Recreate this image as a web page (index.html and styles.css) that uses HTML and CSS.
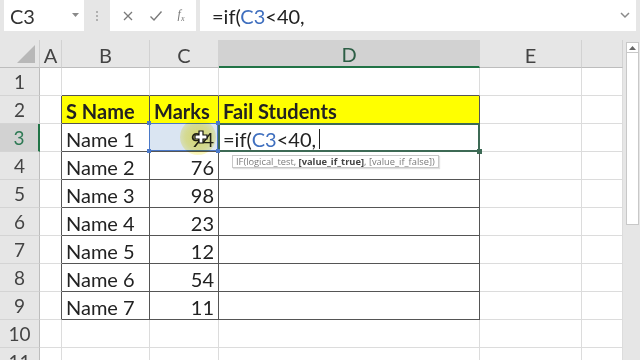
FILE: index.html
```html
<!DOCTYPE html>
<html>
<head>
<meta charset="utf-8">
<link rel="stylesheet" href="styles.css">
</head>
<body>
<div class="app">
  <div class="fbar">
    <div class="namebox"><span class="nb-text">C3</span>
      <svg class="nb-arrow" width="7" height="5" viewBox="0 0 7 5"><path d="M0 0h7L3.5 4z" fill="#8a8a8a"/></svg>
    </div>
    <div class="grip"><i></i><i></i><i></i></div>
    <div class="btns">
      <svg width="12" height="12" viewBox="0 0 12 12"><path d="M2 2l8 8M10 2l-8 8" stroke="#7a7a7a" stroke-width="1.3"/></svg>
      <svg width="14" height="12" viewBox="0 0 14 12"><path d="M1.5 6.5l3.5 3.5 7.5-8.5" stroke="#7a7a7a" stroke-width="1.4" fill="none"/></svg>
      <span class="fx">f<sub>x</sub></span>
    </div>
    <div class="formula"><span class="ftext">=if(<span class="ref">C3</span>&lt;40,</span>
      <svg class="f-arrow" width="10" height="7" viewBox="0 0 10 7"><path d="M1 1l4 4 4-4" stroke="#8a8a8a" stroke-width="1.5" fill="none"/></svg>
    </div>
  </div>
  <div class="sheet">
    <div class="grid">
      <div class="corner"><svg width="20" height="20" viewBox="0 0 20 20"><path d="M19 1V19H1z" fill="#b8b8b8"/></svg></div>
      <div class="ch">A</div><div class="ch">B</div><div class="ch">C</div><div class="ch sel">D</div><div class="ch">E</div><div class="ch"></div>

      <div class="rh">1</div><div class="c"></div><div class="c tp"></div><div class="c tp"></div><div class="c tp"></div><div class="c"></div><div class="c"></div>

      <div class="rh">2</div><div class="c lt"></div><div class="c tb hd">S Name</div><div class="c tb hd">Marks</div><div class="c tb hd">Fail Students</div><div class="c"></div><div class="c"></div>

      <div class="rh sel">3</div><div class="c lt"></div><div class="c tb">Name 1</div><div class="c tb num refcell">94<i class="h tl"></i><i class="h tr"></i><i class="h bl"></i><i class="h br"></i></div><div class="c tb active">=if(<span class="ref">C3</span>&lt;40,<span class="caret"></span></div><div class="c"></div><div class="c"></div>

      <div class="rh">4</div><div class="c lt"></div><div class="c tb">Name 2</div><div class="c tb num">76</div><div class="c tb"></div><div class="c"></div><div class="c"></div>

      <div class="rh">5</div><div class="c lt"></div><div class="c tb">Name 3</div><div class="c tb num">98</div><div class="c tb"></div><div class="c"></div><div class="c"></div>

      <div class="rh">6</div><div class="c lt"></div><div class="c tb">Name 4</div><div class="c tb num">23</div><div class="c tb"></div><div class="c"></div><div class="c"></div>

      <div class="rh">7</div><div class="c lt"></div><div class="c tb">Name 5</div><div class="c tb num">12</div><div class="c tb"></div><div class="c"></div><div class="c"></div>

      <div class="rh">8</div><div class="c lt"></div><div class="c tb">Name 6</div><div class="c tb num">54</div><div class="c tb"></div><div class="c"></div><div class="c"></div>

      <div class="rh">9</div><div class="c lt"></div><div class="c tb">Name 7</div><div class="c tb num">11</div><div class="c tb"></div><div class="c"></div><div class="c"></div>

      <div class="rh">10</div><div class="c"></div><div class="c"></div><div class="c"></div><div class="c"></div><div class="c"></div><div class="c"></div>

      <div class="rh">11</div><div class="c"></div><div class="c"></div><div class="c"></div><div class="c"></div><div class="c"></div><div class="c"></div>

      <div class="tip">IF(logical_test, <b>[value_if_true]</b>, [value_if_false])</div>
      <div class="glow"></div>
      <svg class="cursor" width="14" height="14" viewBox="0 0 14 14"><path d="M5 1h4v4h4v4H9v4H5V9H1V5h4z" fill="#fff" stroke="#111" stroke-width="1.2"/></svg>
    </div>
    <div class="vscroll">
      <div class="up"><svg width="7" height="4" viewBox="0 0 7 4"><path d="M0 4h7L3.5 0z" fill="#666"/></svg></div>
      <div class="thumb"></div>
    </div>
  </div>
</div>
</body>
</html>
```
FILE: styles.css
```css
html, body {
  margin: 0;
  padding: 0;
  width: 640px;
  height: 360px;
  overflow: hidden;
  background: #fff;
}
.app {
  width: 640px;
  height: 360px;
  display: flex;
  flex-direction: column;
  font-family: "Lato", "Open Sans", sans-serif;
  color: #222;
}
.fbar {
  height: 40px;
  flex: none;
  background: #e6e6e6;
  display: flex;
  align-items: flex-start;
  padding: 0 4px;
  box-sizing: border-box;
}
.namebox {
  width: 80px;
  height: 31px;
  background: #fff;
  display: flex;
  align-items: center;
  justify-content: space-between;
  padding: 0 5px 0 6px;
  box-sizing: border-box;
}
.nb-text {
  font-size: 20px;
  color: #333;
}
.grip {
  width: 26px;
  height: 31px;
  display: flex;
  flex-direction: column;
  align-items: center;
  justify-content: center;
  gap: 2px;
}
.grip i {
  width: 2px;
  height: 2px;
  background: #b0b0b0;
}
.btns {
  width: 86px;
  height: 31px;
  background: #fff;
  display: flex;
  align-items: center;
  justify-content: space-around;
  padding: 0 4px;
  box-sizing: border-box;
}
.fx {
  font-family: "Liberation Serif", serif;
  font-style: italic;
  font-size: 12px;
  color: #777;
}
.fx sub {
  font-size: 8px;
}
.formula {
  margin-left: 4px;
  flex: 1;
  height: 31px;
  background: #fff;
  display: flex;
  align-items: center;
  justify-content: space-between;
  padding: 0 6px 0 12px;
  box-sizing: border-box;
}
.ftext {
  font-size: 20px;
  color: #222;
}
.ref {
  color: #3f6fbf;
}
.sheet {
  flex: 1;
  display: flex;
  overflow: hidden;
}
.grid {
  position: relative;
  display: grid;
  grid-template-columns: 40px 22px 88px 69px 261px 102px 41px;
  grid-auto-rows: 28px;
  width: 623px;
  flex: none;
  font-size: 20px;
}
.grid > div {
  box-sizing: border-box;
}
.corner {
  background: #e6e6e6;
  border-right: 1px solid #cfcfcf;
  border-bottom: 1px solid #bdbdbd;
  display: flex;
  align-items: flex-end;
  justify-content: flex-end;
  padding: 0 3px 3px 0;
}
.ch {
  background: #e6e6e6;
  border-right: 1px solid #d2d2d2;
  border-bottom: 1px solid #bdbdbd;
  display: flex;
  align-items: center;
  justify-content: center;
  color: #444;
  padding-top: 2px;
}
.ch.sel {
  background: #d2d2d2;
  border-bottom: 2px solid #217346;
  color: #2d5e45;
}
.rh {
  background: #e6e6e6;
  border-right: 1px solid #bdbdbd;
  border-bottom: 1px solid #d4d4d4;
  display: flex;
  align-items: center;
  justify-content: center;
  color: #444;
  font-size: 19px;
}
.rh.sel {
  background: #d2d2d2;
  border-right: 2px solid #217346;
  color: #2f7a55;
}
.c {
  border-right: 1px solid #dcdcdc;
  border-bottom: 1px solid #dcdcdc;
  display: flex;
  align-items: center;
  padding: 2px 4px 0 4px;
  white-space: nowrap;
  color: #222;
}
.c.lt {
  border-right-color: #555;
}
.c.tp {
  border-bottom-color: #555;
}
.c.tb {
  border-right-color: #555;
  border-bottom-color: #555;
}
.c.hd {
  background: #ffff00;
  font-weight: bold;
}
.c.num {
  justify-content: flex-end;
}
.refcell {
  position: relative;
  background: #dae5f2;
}
.refcell::after {
  content: "";
  position: absolute;
  left: -1px;
  top: -1px;
  right: 0;
  bottom: 0;
  border: 1px solid #4a78c8;
}
.h {
  position: absolute;
  width: 4px;
  height: 4px;
  background: #4a78c8;
  z-index: 2;
}
.h.tl { left: -3px; top: -3px; }
.h.tr { right: -2px; top: -3px; }
.h.bl { left: -3px; bottom: -2px; }
.h.br { right: -2px; bottom: -2px; }
.active {
  position: relative;
  padding-left: 4px;
}
.active::after {
  content: "";
  position: absolute;
  left: -1px;
  top: -1px;
  right: -1px;
  bottom: -1px;
  border: 2px solid #3d6a55;
}
.active::before {
  content: "";
  position: absolute;
  right: -3px;
  bottom: -3px;
  width: 5px;
  height: 5px;
  background: #3d6a55;
  z-index: 2;
}
.caret {
  display: inline-block;
  width: 1px;
  height: 20px;
  background: #222;
  margin-left: 3px;
}
.tip {
  position: absolute;
  left: 232px;
  top: 115px;
  height: 13px;
  padding: 0 3px;
  background: #fff;
  border: 1px solid #c8c8c8;
  font-family: "Open Sans", sans-serif;
  font-size: 9.3px;
  line-height: 12px;
  color: #7a7a7a;
  white-space: nowrap;
  box-shadow: 1px 1px 1px rgba(0,0,0,0.12);
}
.tip b {
  color: #444;
}
.glow {
  position: absolute;
  left: 180px;
  top: 79px;
  width: 36px;
  height: 36px;
  border-radius: 50%;
  mix-blend-mode: multiply;
  background: radial-gradient(circle, rgba(245,235,90,0.85) 0%, rgba(245,235,90,0.6) 50%, rgba(245,235,90,0) 100%);
}
.cursor {
  position: absolute;
  left: 194px;
  top: 90px;
}
.vscroll {
  flex: 1;
  background: #e6e6e6;
  display: flex;
  flex-direction: column;
  padding: 2px 1px 0 3px;
}
.up {
  height: 11px;
  background: #fff;
  border: 1px solid #c8c8c8;
  display: flex;
  align-items: center;
  justify-content: center;
  box-sizing: border-box;
}
.thumb {
  height: 172px;
  background: #fff;
  border: 1px solid #c8c8c8;
  border-top: none;
  box-sizing: border-box;
}
```
